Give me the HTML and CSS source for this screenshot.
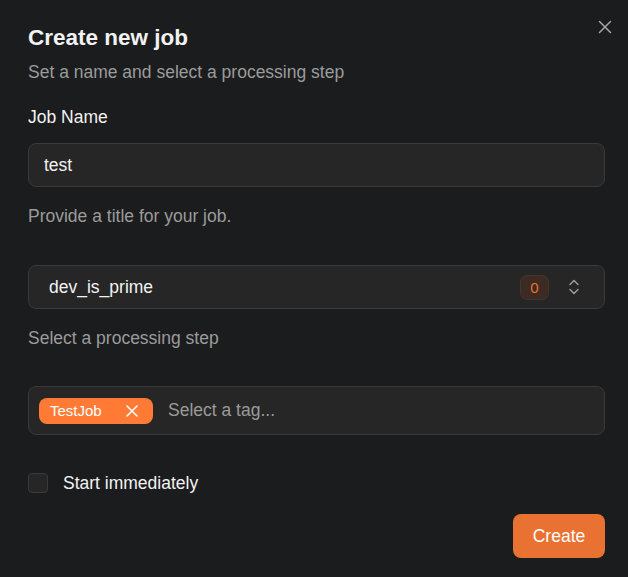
FILE: index.html
```html
<!DOCTYPE html>
<html lang="en">
<head>
    <meta charset="UTF-8">
    <meta name="viewport" content="width=device-width, initial-scale=1.0">
    <title>Create new job</title>
    <link rel="stylesheet" href="styles.css">
</head>
<body>
    <div class="dialog">
        <button class="close" aria-label="Close">
            <svg width="14" height="14" viewBox="0 0 14 14"><path d="M1.5 1.5l11 11M12.5 1.5l-11 11" stroke="currentColor" stroke-width="1.5" stroke-linecap="round"/></svg>
        </button>

        <h2 class="title">Create new job</h2>
        <p class="subtitle">Set a name and select a processing step</p>

        <div class="field">
            <label class="label" for="jobName">Job Name</label>
            <div class="input">test</div>
            <p class="hint">Provide a title for your job.</p>
        </div>

        <div class="field">
            <div class="input select">
                <span class="select-value">dev_is_prime</span>
                <span class="count">0</span>
                <svg class="chevrons" width="14" height="20" viewBox="0 0 14 20"><path d="M3 7.5l4-4 4 4M3 12.5l4 4 4-4" fill="none" stroke="currentColor" stroke-width="1.5" stroke-linecap="round" stroke-linejoin="round"/></svg>
            </div>
            <p class="hint">Select a processing step</p>
        </div>

        <div class="input tags">
            <span class="chip">TestJob
                <svg width="14" height="14" viewBox="0 0 14 14"><path d="M2 2l10 10M12 2L2 12" stroke="currentColor" stroke-width="1.6" stroke-linecap="round"/></svg>
            </span>
            <span class="placeholder">Select a tag...</span>
        </div>

        <label class="check">
            <span class="box"></span>
            Start immediately
        </label>

        <div class="footer">
            <button class="primary">Create</button>
        </div>
    </div>
</body>
</html>
```

FILE: styles.css
```css
body {
    margin: 0;
    background-color: #1b1c1e;
    font-family: "Liberation Sans", Arial, sans-serif;
    color: #f2f2f2;
}

.dialog {
    position: relative;
    padding: 24px 23px 19px 28px;
}

.close {
    position: absolute;
    top: 20px;
    right: 16px;
    background: none;
    border: 0;
    padding: 0;
    color: #a8a8a8;
    display: flex;
}

.title {
    margin: 1px 0 0;
    font-size: 22.5px;
    line-height: 26px;
    font-weight: bold;
}

.subtitle {
    margin: 11px 0 0;
    font-size: 17.5px;
    line-height: 20px;
    color: #9b9b9b;
}

.field {
    margin-top: 25px;
}

.label {
    display: block;
    font-size: 17.5px;
    line-height: 20px;
    margin-bottom: 16px;
}

.input {
    box-sizing: border-box;
    height: 44px;
    background-color: #262626;
    border: 1px solid #3a3a3a;
    border-radius: 8px;
    display: flex;
    align-items: center;
    padding: 0 15px;
    font-size: 17.5px;
}

.hint {
    margin: 19px 0 0;
    font-size: 17.5px;
    line-height: 20px;
    color: #9b9b9b;
}

.field + .field {
    margin-top: 39px;
}

.select {
    padding: 0 23px 0 20px;
}

.select-value {
    flex: 1;
}

.count {
    width: 29px;
    height: 25px;
    border-radius: 7px;
    background-color: #3c2b23;
    border: 1px solid #47332a;
    box-sizing: border-box;
    color: #f26b2a;
    font-size: 15px;
    display: flex;
    align-items: center;
    justify-content: center;
    margin-right: 18px;
}

.chevrons {
    color: #9b9b9b;
}

.tags {
    margin-top: 38px;
    height: 49px;
    padding: 0 10px;
    gap: 15px;
}

.chip {
    display: flex;
    align-items: center;
    justify-content: space-between;
    width: 114px;
    box-sizing: border-box;
    height: 26px;
    padding: 0 14px 0 11px;
    background-color: #ff7a35;
    border-radius: 8px;
    color: #fff;
    font-size: 15px;
}

.placeholder {
    color: #9b9b9b;
    font-size: 17.5px;
}

.check {
    display: flex;
    align-items: center;
    gap: 15px;
    margin-top: 38px;
    font-size: 17.5px;
    line-height: 20px;
}

.box {
    width: 20px;
    height: 20px;
    box-sizing: border-box;
    border: 1px solid #3a3a3a;
    background-color: #262626;
    border-radius: 4px;
}

.footer {
    display: flex;
    justify-content: flex-end;
    margin-top: 21px;
}

.primary {
    width: 92px;
    height: 44px;
    border: 0;
    border-radius: 8px;
    background-color: #e97132;
    color: #fff;
    font-family: inherit;
    font-size: 17.5px;
}
```
